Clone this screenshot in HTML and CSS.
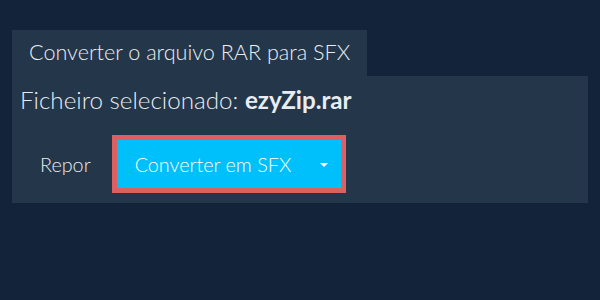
FILE: index.html
```html
<!DOCTYPE html>
<html lang="pt">
  <head>
    <meta charset="UTF-8" />
    <title>Converter RAR para SFX</title>
    <link rel="stylesheet" href="styles.css">
  </head>
  <body>
    <div class="tab">Converter o arquivo RAR para SFX</div>
    <div class="panel">
      <div class="file-line">Ficheiro selecionado: <b>ezyZip.rar</b></div>
      <div class="actions">
        <button class="reset-button">Repor</button>
        <button class="convert-button">
          <span>Converter em SFX</span>
          <span class="caret"></span>
        </button>
      </div>
    </div>
  </body>
</html>
```

FILE: styles.css
```css
body {
  margin: 0;
  padding: 30px 12px 0 12px;
  background: #12233a;
  font-family: Lato, "Open Sans", sans-serif;
  font-weight: 300;
  color: #e8edf2;
  width: 576px;
  height: 270px;
}

.tab {
  display: inline-block;
  background: #243649;
  padding: 8px 17px 10px 17px;
  font-size: 21.6px;
  line-height: 28px;
}

.panel {
  background: #243649;
  padding: 8px 8px 8px 8px;
  height: 111px;
}

.file-line {
  font-size: 24.2px;
  line-height: 32px;
}

.file-line b {
  font-weight: 700;
}

.actions {
  display: flex;
  align-items: center;
  margin-top: 19px;
}

.reset-button {
  background: transparent;
  border: none;
  color: #e8edf2;
  font-family: inherit;
  font-weight: 300;
  font-size: 19.8px;
  padding: 0 20px;
  margin-right: 1px;
}

.convert-button {
  display: flex;
  align-items: center;
  justify-content: space-between;
  width: 234px;
  height: 58px;
  background: #00c0fc;
  border: 5px solid #dc6060;
  color: #ffffff;
  font-family: inherit;
  font-weight: 300;
  font-size: 19.8px;
  padding: 0 13px 0 18px;
}

.caret {
  width: 0;
  height: 0;
  margin-top: 1px;
  border-left: 4px solid transparent;
  border-right: 4px solid transparent;
  border-top: 4px solid #ffffff;
}
```
